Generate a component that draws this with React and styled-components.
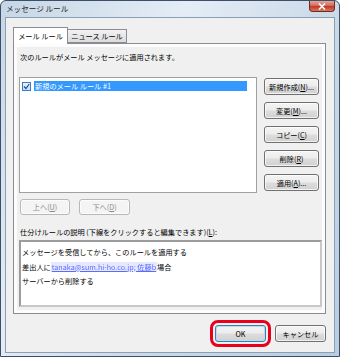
import React from 'react';
import styled, { createGlobalStyle } from 'styled-components';

const GlobalStyle = createGlobalStyle`
  html, body {
    margin: 0;
    padding: 0;
    background: #ffffff;
  }
  body {
    font-family: "Noto Sans CJK JP", "Noto Sans", sans-serif;
    font-size: 7.2px;
    color: #000;
  }
`;

const Window = styled.div`
  width: 340px;
  height: 357px;
  box-sizing: border-box;
  border: 1px solid #3c4f66;
  border-radius: 6px 6px 0 0;
  background: linear-gradient(120deg, #c6d6e6 0%, #e4edf6 35%, #cddbe9 60%, #b9cde0 100%);
  display: flex;
  flex-direction: column;
  padding: 0 4px 3px 4px;
  overflow: hidden;
`;

const TitleBar = styled.div`
  height: 16px;
  display: flex;
  align-items: flex-start;
  justify-content: space-between;
`;

const Title = styled.div`
  padding: 3px 0 0 1px;
  font-size: 7.6px;
  line-height: 10px;
  color: #1b1b1b;
`;

const CloseButton = styled.div`
  width: 26px;
  height: 11px;
  box-sizing: border-box;
  border: 1px solid #6e2a23;
  border-top: none;
  border-radius: 0 0 4px 4px;
  background: linear-gradient(#e6a79c 0%, #d36b5c 45%, #c0392b 55%, #d77a5d 100%);
  display: flex;
  align-items: center;
  justify-content: center;
`;

const Body = styled.div`
  flex: 1;
  background: #f0f0f0;
  border: 1px solid #8a9fb6;
  display: flex;
  flex-direction: column;
  padding: 9px 8px 10px 7px;
`;

const TabRow = styled.div`
  display: flex;
  align-items: flex-end;
  height: 16px;
  position: relative;
  z-index: 1;
`;

const Tab = styled.div`
  box-sizing: border-box;
  width: ${p => p.$w}px;
  height: ${p => (p.$active ? '17px' : '14px')};
  margin-bottom: ${p => (p.$active ? '-1px' : '0')};
  padding: 0 3px;
  display: flex;
  align-items: center;
  justify-content: center;
  white-space: nowrap;
  border: 1px solid #898c95;
  border-bottom: ${p => (p.$active ? 'none' : '1px solid #898c95')};
  border-left: ${p => (p.$active ? '1px solid #898c95' : 'none')};
  background: ${p => (p.$active ? '#ffffff' : 'linear-gradient(#f2f2f2, #dcdcdc)')};
`;

const Panel = styled.div`
  width: 313px;
  height: 271px;
  box-sizing: border-box;
  border: 1px solid #898c95;
  background: #fcfcfc;
  padding: 3px;
  display: flex;
`;

const PanelInner = styled.div`
  flex: 1;
  background: #f0f0f0;
  display: flex;
  flex-direction: column;
  padding: 0 0 0 2px;
`;

const Caption = styled.div`
  height: 20px;
  display: flex;
  align-items: center;
  padding-left: 1px;
  margin-bottom: 10px;
`;

const MiddleRow = styled.div`
  display: flex;
  gap: 7px;
`;

const ListBox = styled.div`
  width: 238px;
  height: 116px;
  box-sizing: border-box;
  border: 1px solid #a0a0a0;
  background: #ffffff;
  padding: 3px 0 0 2px;
`;

const ListItem = styled.div`
  display: flex;
  align-items: center;
  gap: 3px;
`;

const CheckBox = styled.div`
  width: 9px;
  height: 9px;
  box-sizing: border-box;
  border: 1px solid #3a7bc8;
  background: linear-gradient(#e8f2fc, #c9def5);
  display: flex;
  align-items: center;
  justify-content: center;
`;

const Highlight = styled.div`
  width: 212px;
  height: 10px;
  background: #3399ff;
  color: #ffffff;
  display: flex;
  align-items: center;
  padding-left: 1px;
  white-space: nowrap;
`;

const ButtonColumn = styled.div`
  display: flex;
  flex-direction: column;
  gap: 7px;
  padding-top: 1px;
`;

const Button = styled.div`
  box-sizing: border-box;
  width: ${p => p.$w || 55}px;
  height: ${p => p.$h || 17}px;
  border: 1px solid ${p => (p.$disabled ? '#b5b9bd' : p.$default ? '#3c7fb1' : '#707070')};
  border-radius: 3px;
  background: ${p =>
    p.$disabled
      ? '#f4f4f4'
      : 'linear-gradient(#f4f4f4 0%, #ececec 48%, #dddddd 52%, #d1d1d1 100%)'};
  box-shadow: ${p => (p.$default ? 'inset 0 0 0 1px #b8dcf2' : 'inset 0 0 0 1px rgba(255,255,255,0.7)')};
  color: ${p => (p.$disabled ? '#8a8a8a' : '#000')};
  display: flex;
  align-items: center;
  justify-content: center;
  white-space: nowrap;
  outline: ${p => (p.$marked ? '3px solid #e8001c' : 'none')};
  outline-offset: 2px;
`;

const U = styled.span`
  text-decoration: underline;
`;

const MoveRow = styled.div`
  display: flex;
  gap: 9px;
  margin-top: 6px;
  padding-left: 1px;
`;

const Label = styled.div`
  height: 14px;
  margin-top: 10px;
  margin-bottom: 1px;
  display: flex;
  align-items: center;
  padding-left: 1px;
`;

const DescBox = styled.div`
  height: 67px;
  box-sizing: border-box;
  border: 2px solid #9c9c9c;
  border-right-color: #c8c8c8;
  border-bottom-color: #c8c8c8;
  background: #ffffff;
  padding: 3px 0 0 1px;
  display: flex;
  flex-direction: column;
`;

const DescLine = styled.div`
  height: 14.5px;
  line-height: 14.5px;
  white-space: nowrap;
`;

const Link = styled.span`
  color: #5a6cff;
  background: #e6e8ff;
  text-decoration: underline;
  filter: blur(0.5px);
  padding: 0 1px;
`;

const Footer = styled.div`
  display: flex;
  justify-content: flex-end;
  gap: 9px;
  margin-top: 11px;
`;

function App() {
  return (
    <>
      <GlobalStyle />
      <Window>
        <TitleBar>
          <Title>メッセージ ルール</Title>
          <CloseButton>
            <svg width="8" height="7" viewBox="0 0 8 7">
              <path d="M1 0.5 L7 6.5 M7 0.5 L1 6.5" stroke="#ffffff" strokeWidth="1.6" />
            </svg>
          </CloseButton>
        </TitleBar>
        <Body>
          <TabRow>
            <Tab $active $w={55}>メール ルール</Tab>
            <Tab $w={59}>ニュース ルール</Tab>
          </TabRow>
          <Panel>
            <PanelInner>
              <Caption>次のルールがメール メッセージに適用されます。</Caption>
              <MiddleRow>
                <ListBox>
                  <ListItem>
                    <CheckBox>
                      <svg width="7" height="7" viewBox="0 0 7 7">
                        <path d="M1 3.5 L3 5.5 L6.2 1" fill="none" stroke="#1d4f9a" strokeWidth="1.2" />
                      </svg>
                    </CheckBox>
                    <Highlight>新規のメール ルール #1</Highlight>
                  </ListItem>
                </ListBox>
                <ButtonColumn>
                  <Button>新規作成(<U>N</U>)...</Button>
                  <Button>変更(<U>M</U>)...</Button>
                  <Button>コピー(<U>C</U>)</Button>
                  <Button>削除(<U>R</U>)</Button>
                  <Button>適用(<U>A</U>)...</Button>
                </ButtonColumn>
              </MiddleRow>
              <MoveRow>
                <Button $disabled $w={50} $h={16}>上へ(<U>U</U>)</Button>
                <Button $disabled $w={51} $h={16}>下へ(<U>D</U>)</Button>
              </MoveRow>
              <Label>仕分けルールの説明 (下線をクリックすると編集できます)(<U>L</U>):</Label>
              <DescBox>
                <DescLine>メッセージを受信してから、このルールを適用する</DescLine>
                <DescLine>
                  差出人に<Link>tanaka@sum.hi-ho.co.jp; 佐藤b</Link>場合
                </DescLine>
                <DescLine>サーバーから削除する</DescLine>
              </DescBox>
            </PanelInner>
          </Panel>
          <Footer>
            <Button $default $marked $w={51}>OK</Button>
            <Button $w={51}>キャンセル</Button>
          </Footer>
        </Body>
      </Window>
    </>
  );
}

export default App;
